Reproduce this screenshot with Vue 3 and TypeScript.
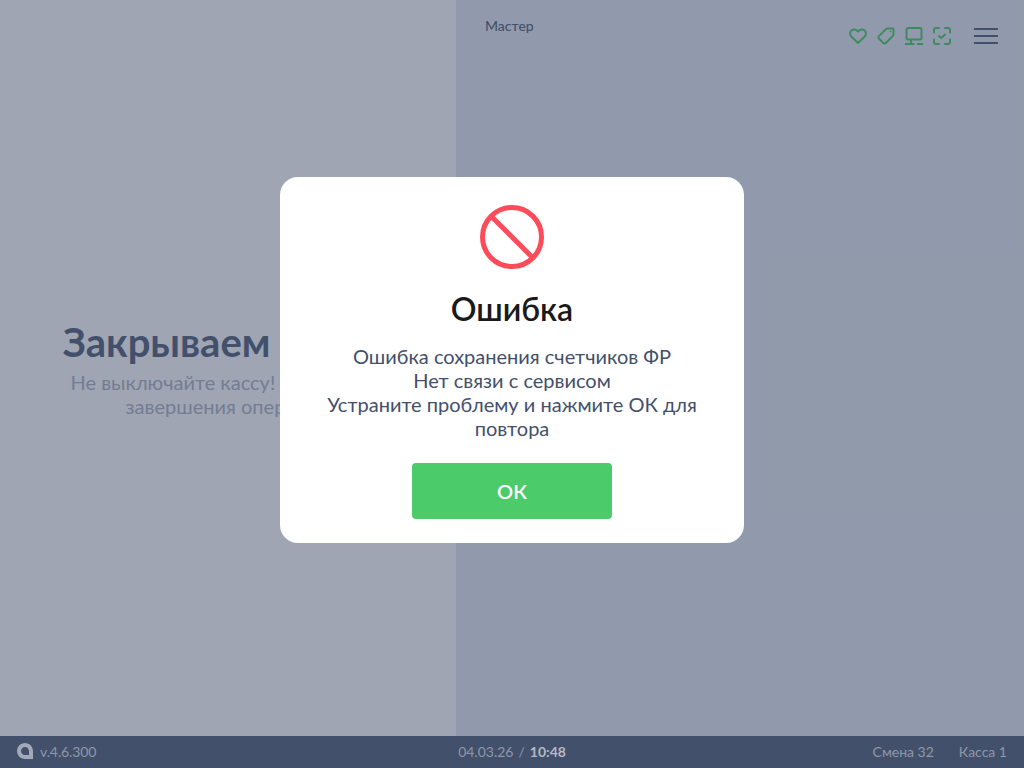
<script setup lang="ts">
const messages = [
  "Ошибка сохранения счетчиков ФР",
  "Нет связи с сервисом",
  "Устраните проблему и нажмите ОК для повтора",
];
</script>

<template>
  <div class="screen">
    <main class="main">
      <section class="left">
        <h1 class="left-title">Закрываем смену</h1>
        <p class="left-text">Не выключайте кассу! Дождитесь завершения операции</p>
      </section>
      <section class="right">
        <header class="top">
          <span class="role">Мастер</span>
          <div class="top-icons">
            <svg class="icon" viewBox="0 0 18 18" fill="none" stroke="currentColor" stroke-width="2" stroke-linejoin="round">
              <path d="M9 16 2.300 9.500C.6 7.800.7 4.900 2.400 3.400 4.100 1.900 6.900 2 9 4.500 11.100 2 13.900 1.900 15.600 3.400 17.300 4.900 17.400 7.800 15.700 9.500Z" />
            </svg>
            <svg class="icon" viewBox="0 0 18 18" fill="none" stroke="currentColor" stroke-width="2" stroke-linejoin="round">
              <path d="M10.500 1.500H15.500C16.100 1.500 16.500 1.900 16.500 2.500V7.500C16.500 8 16.300 8.400 16 8.700L8.800 16C8.100 16.700 7.100 16.700 6.400 16L1.900 11.500C1.200 10.800 1.200 9.800 1.900 9.100L9.200 2C9.600 1.700 10 1.500 10.500 1.500Z" />
              <circle cx="13.500" cy="4.500" r=".5" fill="currentColor" stroke-width="1" />
            </svg>
            <svg class="icon" viewBox="0 0 18 18" fill="none" stroke="currentColor" stroke-width="2" stroke-linejoin="round">
              <rect x="1.500" y="1" width="15" height="11.500" rx="1.500" />
              <path d="M6 12.500V17M0 17H9.500M12 17H18" />
            </svg>
            <svg class="icon" viewBox="0 0 18 18" fill="none" stroke="currentColor" stroke-width="2" stroke-linejoin="round" stroke-linecap="round">
              <path d="M6 1H3C1.800 1 1 1.800 1 3V5.500M12 1H15C16.200 1 17 1.800 17 3V5.500M17 12.500V15C17 16.200 16.200 17 15 17H12M6 17H3C1.800 17 1 16.200 1 15V12.500" />
              <path d="M6 9 8.200 11 12 7.500" />
            </svg>
          </div>
          <button class="burger" type="button">
            <span></span>
            <span></span>
            <span></span>
          </button>
        </header>
      </section>
    </main>

    <footer class="status">
      <div class="status-left">
        <svg class="logo" viewBox="0 0 16 16">
          <path fill-rule="evenodd" d="M8 0C3.600 0 0 3.600 0 8 0 12.400 3.600 16 8 16H16V8C16 3.600 12.400 0 8 0ZM8 4C5.800 4 4 5.800 4 8 4 10.200 5.800 12 8 12H12V8C12 5.800 10.200 4 8 4Z" />
        </svg>
        <span>v.4.6.300</span>
      </div>
      <div class="status-mid">04.03.26<i>/</i><b>10:48</b></div>
      <div class="status-right">
        <span>Смена 32</span>
        <span>Касса 1</span>
      </div>
    </footer>

    <div class="overlay">
      <div class="dialog">
        <svg class="stop" viewBox="0 0 64 64" fill="none" stroke="#fc4c5a" stroke-width="5">
          <circle cx="32" cy="32" r="29.500" />
          <path d="M12 12 52 52" />
        </svg>
        <h2 class="dialog-title">Ошибка</h2>
        <div class="dialog-text">
          <p v-for="(line, i) in messages" :key="i">{{ line }}</p>
        </div>
        <button class="ok" type="button">ОК</button>
      </div>
    </div>
  </div>
</template>

<style>
html,
body {
  margin: 0;
  height: 100%;
}
</style>

<style scoped>
.screen {
  position: relative;
  width: 1024px;
  height: 768px;
  display: flex;
  flex-direction: column;
  overflow: hidden;
  font-family: Lato, "Noto Sans", sans-serif;
  color: #43506b;
}

.main {
  flex: 1;
  display: grid;
  grid-template-columns: 456px 1fr;
}

.left {
  background: #fbfafb;
  display: flex;
  flex-direction: column;
  align-items: center;
  justify-content: center;
  text-align: center;
  padding: 0 60px;
}

.left-title {
  margin: 0;
  font-size: 40px;
  line-height: 48px;
  font-weight: 700;
  white-space: nowrap;
}

.left-text {
  margin: 4px 0 0;
  font-size: 20px;
  line-height: 24px;
  color: #a3aab8;
}

.right {
  background: #dfe5ec;
}

.top {
  display: flex;
  align-items: flex-start;
  padding: 17px 26px 0 29px;
}

.role {
  font-size: 14px;
  line-height: 17px;
  font-weight: 500;
}

.top-icons {
  margin-left: auto;
  margin-top: 10px;
  display: flex;
  gap: 10px;
  color: #3bc455;
}

.icon {
  width: 18px;
  height: 18px;
  display: block;
}

.burger {
  margin: 11px 0 0 23px;
  padding: 0;
  width: 24px;
  height: 16px;
  border: 0;
  background: none;
  display: flex;
  flex-direction: column;
  justify-content: space-between;
}

.burger span {
  display: block;
  height: 2px;
  background: #43506b;
}

.status {
  position: relative;
  z-index: 2;
  height: 32px;
  box-sizing: border-box;
  padding: 0 17px 2px;
  background: #43506b;
  color: #8f97a8;
  display: grid;
  grid-template-columns: 1fr auto 1fr;
  align-items: center;
  font-size: 14px;
}

.status-left {
  display: flex;
  align-items: center;
  gap: 7px;
  letter-spacing: -0.1px;
}

.logo {
  width: 16px;
  height: 16px;
  fill: #a2a9b8;
}

.status-mid i {
  font-style: normal;
  margin: 0 5px;
}

.status-mid b {
  color: #b4bac6;
}

.status-right {
  display: flex;
  justify-content: flex-end;
  gap: 25px;
}

.overlay {
  position: absolute;
  inset: 0;
  z-index: 1;
  padding-bottom: 48px;
  background: rgba(67, 80, 107, 0.5);
  display: flex;
  align-items: center;
  justify-content: center;
}

.dialog {
  width: 464px;
  height: 366px;
  box-sizing: border-box;
  background: #fff;
  border-radius: 18px;
  padding: 28px 40px 24px;
  display: flex;
  flex-direction: column;
  align-items: center;
  text-align: center;
}

.stop {
  width: 64px;
  height: 64px;
  flex: none;
}

.dialog-title {
  margin: 20px 0 0;
  font-size: 32px;
  line-height: 40px;
  font-weight: 600;
  color: #1a1a1a;
}

.dialog-text {
  margin-top: 15px;
  font-size: 20px;
  line-height: 24px;
}

.dialog-text p {
  margin: 0;
}

.ok {
  margin-top: 23px;
  width: 200px;
  height: 56px;
  flex: none;
  border: 0;
  border-radius: 4px;
  background: #4ccb6a;
  color: #fff;
  font-family: inherit;
  font-size: 20px;
  font-weight: 600;
}
</style>
